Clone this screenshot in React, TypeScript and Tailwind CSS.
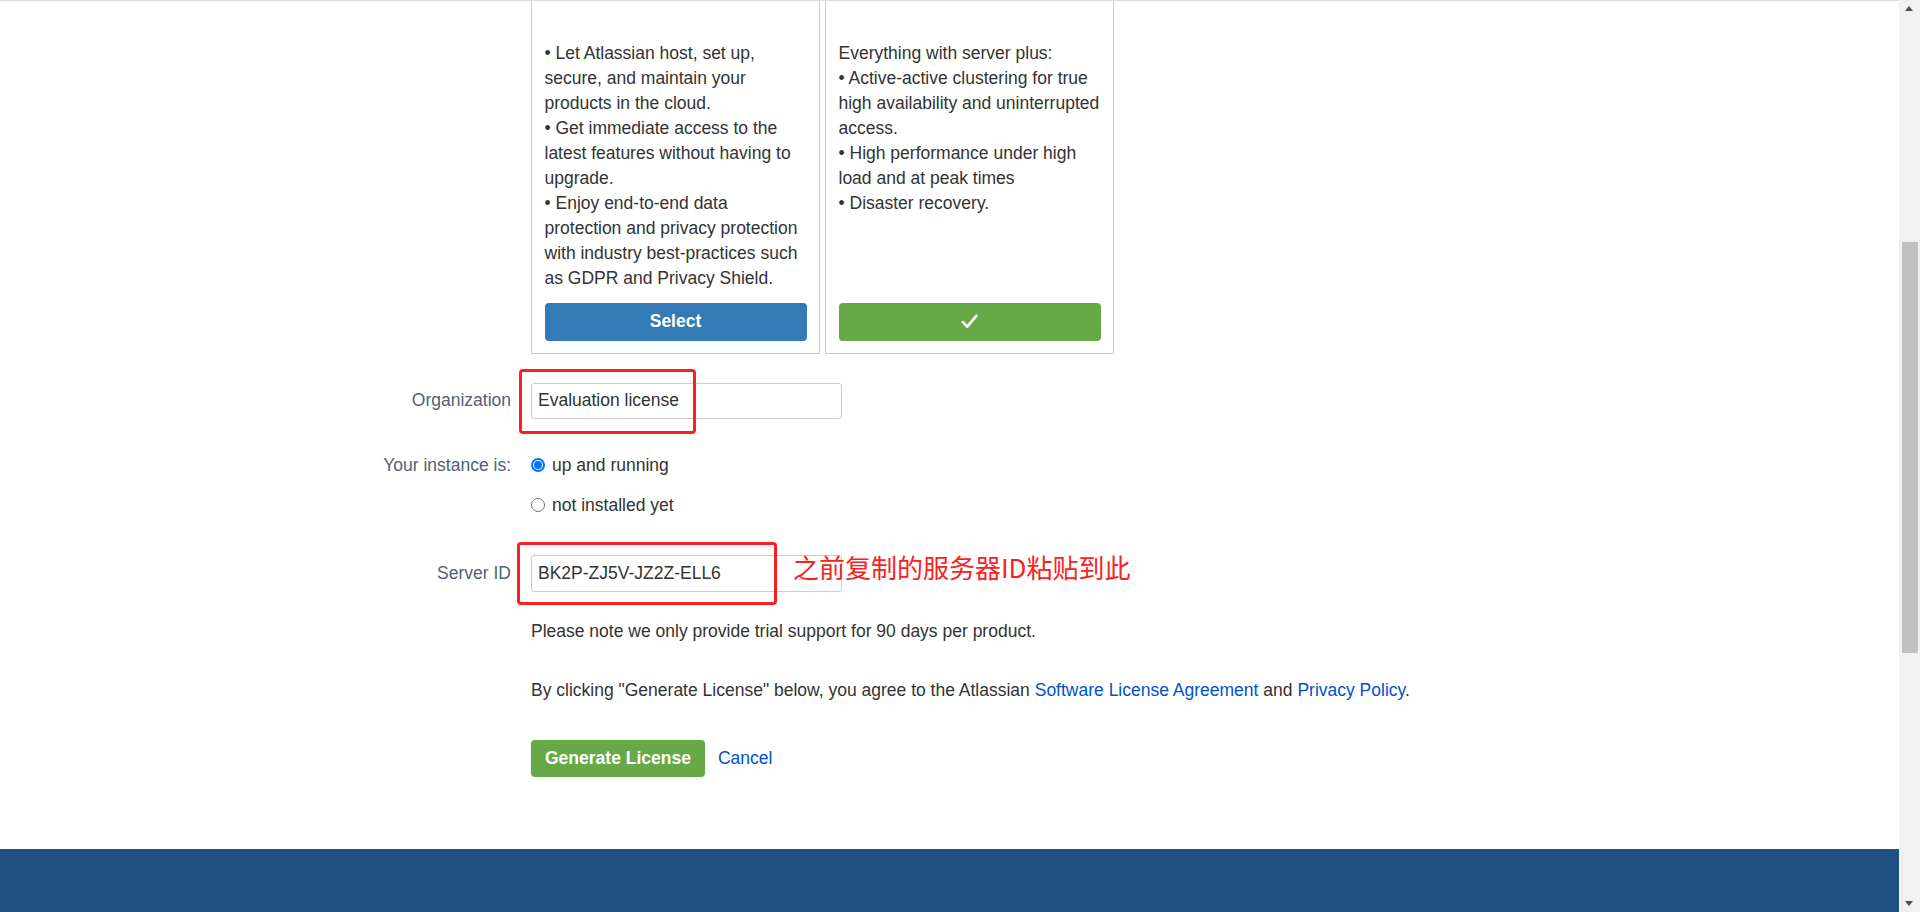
import React from "react";

const leftLines = [
  "• Let Atlassian host, set up,",
  "secure, and maintain your",
  "products in the cloud.",
  "• Get immediate access to the",
  "latest features without having to",
  "upgrade.",
  "• Enjoy end-to-end data",
  "protection and privacy protection",
  "with industry best-practices such",
  "as GDPR and Privacy Shield.",
];

const rightLines = [
  "Everything with server plus:",
  "• Active-active clustering for true",
  "high availability and uninterrupted",
  "access.",
  "• High performance under high",
  "load and at peak times",
  "• Disaster recovery.",
];

function Card({ lines, children }: { lines: string[]; children: React.ReactNode }) {
  return (
    <div className="flex w-[289px] flex-col border-x border-b border-[#cccccc] px-[12.5px] pt-[40px] pb-[12px]">
      <div className="h-[250px]">
        {lines.map((l, i) => (
          <div key={i} className="whitespace-nowrap">
            {l}
          </div>
        ))}
      </div>
      <div className="mt-[12px]">{children}</div>
    </div>
  );
}

function Label({ children }: { children?: React.ReactNode }) {
  return (
    <div className="w-[531px] shrink-0 pr-[20px] text-right text-[#526173]">{children}</div>
  );
}

function TextInput({ value }: { value: string }) {
  return (
    <input
      readOnly
      value={value}
      className="h-[36.5px] w-[311px] rounded-[3px] border border-[#cccccc] bg-white px-[6px] text-[17.5px] text-[#333333] outline-none"
    />
  );
}

function Radio({ checked, label }: { checked?: boolean; label: string }) {
  return (
    <div className="flex h-[25px] items-center">
      <span
        className={
          checked
            ? "flex h-[14px] w-[14px] items-center justify-center rounded-full border-[2px] border-[#0075ff] bg-white"
            : "flex h-[14px] w-[14px] items-center justify-center rounded-full border border-[#767676] bg-white"
        }
      >
        {checked && <span className="h-[8px] w-[8px] rounded-full bg-[#0075ff]" />}
      </span>
      <span className="ml-[7px]">{label}</span>
    </div>
  );
}

export default function App() {
  return (
    <div className="flex h-[912px] w-[1920px] overflow-hidden bg-white font-['Liberation_Sans',Arial,sans-serif] text-[17.5px] leading-[25px] text-[#333333]">
      <div className="relative flex flex-1 flex-col border-t border-[#dcdcdc]">
        <main className="flex-1">
          <div className="flex">
            <Label />
            <div className="flex gap-[5px]">
              <Card lines={leftLines}>
                <button className="flex h-[37.5px] w-full items-center justify-center rounded-[4px] bg-[#337ab7] font-bold text-white">
                  Select
                </button>
              </Card>
              <Card lines={rightLines}>
                <button className="flex h-[37.5px] w-full items-center justify-center rounded-[4px] bg-[#66aa47] text-white">
                  <svg width="17" height="15" viewBox="0 0 17 15" fill="none">
                    <path
                      d="M1.8 8.2 L6.2 12.6 L15.4 1.8"
                      stroke="white"
                      strokeWidth="2.6"
                      strokeLinecap="round"
                      strokeLinejoin="round"
                    />
                  </svg>
                </button>
              </Card>
            </div>
          </div>

          <div className="mt-[29px] flex items-center">
            <Label>Organization</Label>
            <TextInput value="Evaluation license" />
          </div>

          <div className="mt-[33.5px] flex">
            <Label>Your instance is:</Label>
            <div className="flex flex-col gap-[15px]">
              <Radio checked label="up and running" />
              <Radio label="not installed yet" />
            </div>
          </div>

          <div className="mt-[37.5px] flex items-center">
            <Label>Server ID</Label>
            <TextInput value="BK2P-ZJ5V-JZ2Z-ELL6" />
          </div>

          <div className="mt-[27px] flex">
            <Label />
            <p>Please note we only provide trial support for 90 days per product.</p>
          </div>

          <div className="mt-[34px] flex">
            <Label />
            <p>
              By clicking "Generate License" below, you agree to the Atlassian{" "}
              <a className="text-[#0052cc]">Software License Agreement</a> and{" "}
              <a className="text-[#0052cc]">Privacy Policy</a>.
            </p>
          </div>

          <div className="mt-[37px] flex items-center">
            <Label />
            <button className="flex h-[37.5px] items-center rounded-[4px] bg-[#66aa47] px-[14px] font-bold text-white">
              Generate License
            </button>
            <a className="ml-[13px] text-[#0052cc]">Cancel</a>
          </div>
        </main>
        <footer className="h-[63.5px] bg-[#205081]" />

        <div className="pointer-events-none absolute left-[519px] top-[368px] h-[65px] w-[177px] rounded-[4px] border-[3px] border-[#fb1f1f]" />
        <div className="pointer-events-none absolute left-[517px] top-[540.5px] h-[63.5px] w-[259.5px] rounded-[4px] border-[3px] border-[#fb1f1f]" />
        <div className="pointer-events-none absolute left-[793px] top-[551px] whitespace-nowrap font-['Noto_Sans_CJK_SC',sans-serif] text-[26px] leading-[30px] text-[#fa2121]">
          之前复制的服务器ID粘贴到此
        </div>
      </div>

      <div className="relative w-[21px] shrink-0 bg-[#f1f1f1]">
        <div className="absolute left-[6px] top-[6px] h-0 w-0 border-x-[4.5px] border-b-[5px] border-x-transparent border-b-[#505050]" />
        <div className="absolute left-[2.5px] top-[242px] h-[411px] w-[16px] bg-[#c1c1c1]" />
        <div className="absolute bottom-[6px] left-[6px] h-0 w-0 border-x-[4.5px] border-t-[5px] border-x-transparent border-t-[#505050]" />
      </div>
    </div>
  );
}
